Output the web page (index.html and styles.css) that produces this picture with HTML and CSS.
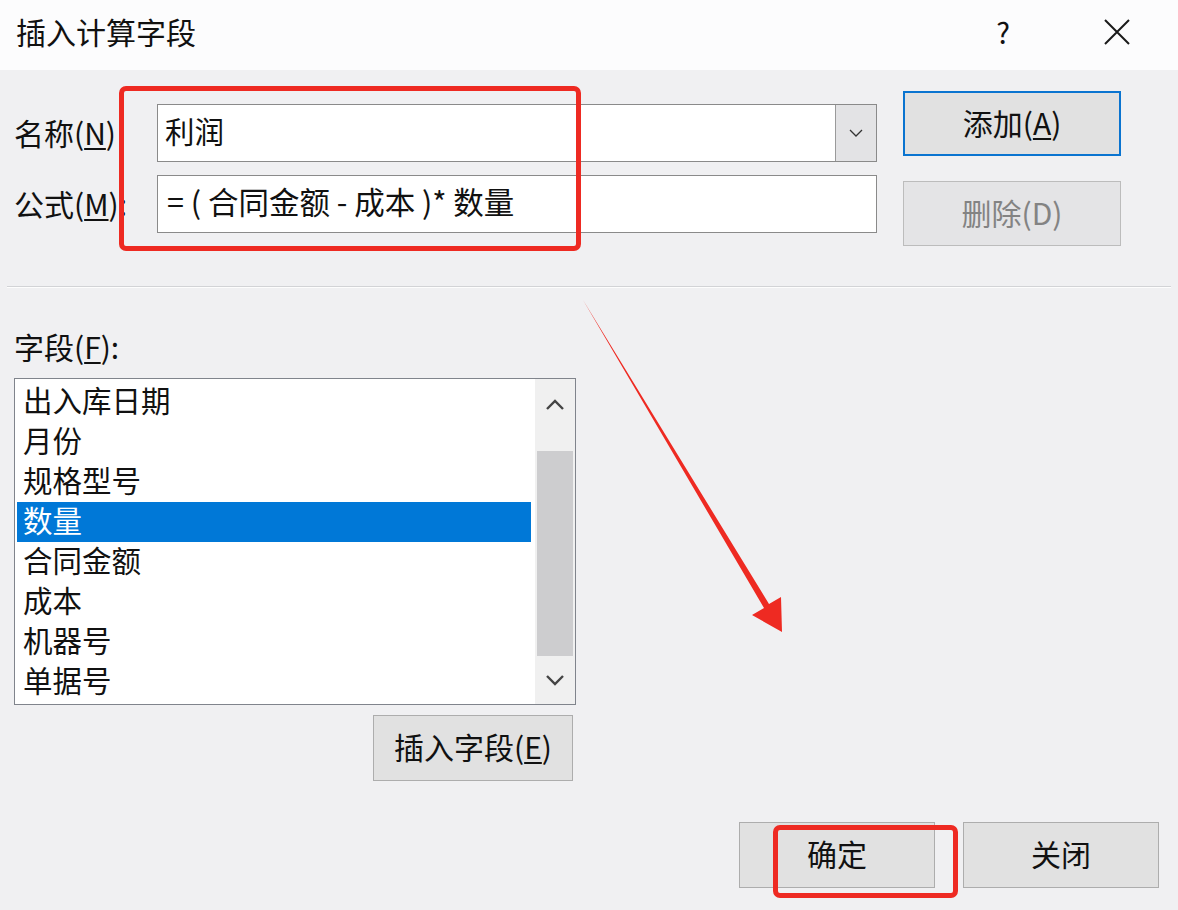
FILE: index.html
```html
<!DOCTYPE html>
<html lang="zh-CN">
<head>
  <meta charset="UTF-8">
  <meta name="viewport" content="width=device-width, initial-scale=1.0">
  <title>插入计算字段</title>
  <link rel="stylesheet" href="styles.css">
</head>
<body>
  <div class="dialog">
    <!-- title bar -->
    <div class="titlebar">
      <span class="title">插入计算字段</span>
      <span class="help">?</span>
      <svg class="close" width="26" height="26" viewBox="0 0 26 26">
        <path d="M1 1 L25 25 M25 1 L1 25" stroke="#1a1a1a" stroke-width="2" fill="none"/>
      </svg>
    </div>

    <div class="content">
      <!-- name / formula -->
      <div class="top">
        <div class="form">
          <div class="row">
            <label>名称(<u>N</u>)</label>
            <div class="box combo">
              <span class="value">利润</span>
              <span class="drop">
                <svg width="14" height="8" viewBox="0 0 14 8"><path d="M1 1 L7 7 L13 1" stroke="#333" stroke-width="1.3" fill="none"/></svg>
              </span>
            </div>
          </div>
          <div class="row">
            <label>公式(<u>M</u>):</label>
            <div class="box">
              <span class="value formula">= ( 合同金额 - 成本 )* 数量</span>
            </div>
          </div>
        </div>
        <div class="side">
          <button class="btn btn-default">添加(<u>A</u>)</button>
          <button class="btn btn-disabled">删除(D)</button>
        </div>
      </div>

      <div class="divider"></div>

      <!-- field list -->
      <div class="fields-label">字段(<u>F</u>):</div>
      <div class="listbox">
        <ul class="items">
          <li>出入库日期</li>
          <li>月份</li>
          <li>规格型号</li>
          <li class="selected">数量</li>
          <li>合同金额</li>
          <li>成本</li>
          <li>机器号</li>
          <li>单据号</li>
        </ul>
        <div class="scrollbar">
          <span class="arrow">
            <svg width="20" height="12" viewBox="0 0 20 12"><path d="M2 10 L10 2 L18 10" stroke="#444" stroke-width="2.4" fill="none"/></svg>
          </span>
          <span class="thumb"></span>
          <span class="arrow">
            <svg width="20" height="12" viewBox="0 0 20 12"><path d="M2 2 L10 10 L18 2" stroke="#444" stroke-width="2.4" fill="none"/></svg>
          </span>
        </div>
      </div>
      <div class="insert-row">
        <button class="btn btn-insert">插入字段(<u>E</u>)</button>
      </div>

      <div class="footer">
        <button class="btn btn-foot">确定</button>
        <button class="btn btn-foot">关闭</button>
      </div>
    </div>

    <!-- red annotations drawn over the dialog -->
    <div class="mark mark-form"></div>
    <div class="mark mark-ok"></div>
    <svg class="pointer" width="1178" height="910" viewBox="0 0 1178 910">
      <polygon points="583,300 769,604 781,597 782,632 752,615 764,608" fill="#ee2a22"/>
    </svg>
  </div>
</body>
</html>
```

FILE: styles.css
```css
body {
  margin: 0;
  font-family: "Noto Sans CJK SC", "Noto Sans", sans-serif;
  color: #111;
  background-color: #f0f0f2;
}

.dialog {
  position: relative;
  width: 1178px;
  height: 910px;
  overflow: hidden;
}

/* title bar */
.titlebar {
  display: flex;
  align-items: center;
  height: 70px;
  padding: 0 48px 0 16px;
  background-color: #fcfcfd;
}

.title {
  font-size: 30px;
  flex: 1;
  margin-top: -9px;
}

.help {
  font-size: 29px;
  margin-right: 94px;
  margin-top: -8px;
}

.close {
  margin-top: -6px;
}

.content {
  padding: 0 19px 0 14px;
}

/* name + formula */
.top {
  display: flex;
  padding-top: 21px;
}

.form {
  width: 863px;
  margin-top: 13px;
  display: flex;
  flex-direction: column;
  gap: 13px;
}

.row {
  display: flex;
  align-items: center;
  height: 58px;
}

.row label {
  width: 143px;
  font-size: 30px;
  white-space: nowrap;
  margin-top: -3px;
}

u {
  text-decoration-thickness: 2px;
  text-underline-offset: 3px;
}

.box {
  flex: 1;
  height: 56px;
  display: flex;
  align-items: center;
  border: 1px solid #8a8a8a;
  background-color: #fff;
}

.value {
  flex: 1;
  font-size: 29.5px;
  padding-left: 7px;
  margin-top: -6px;
}

.formula {
  font-size: 30.5px;
  padding-left: 9px;
}

.drop {
  width: 40px;
  height: 56px;
  display: flex;
  align-items: center;
  justify-content: center;
  border-left: 1px solid #9a9a9a;
  background-color: #e3e3e5;
}

.side {
  margin-left: 26px;
  width: 218px;
  display: flex;
  flex-direction: column;
  gap: 25px;
}

.btn {
  font-family: inherit;
  font-size: 30px;
  color: #111;
  background-color: #e1e1e1;
  border: 1px solid #adadad;
  padding: 0 0 4px;
  cursor: pointer;
}

.btn-default {
  height: 65px;
  border: 2px solid #0a74d0;
}

.btn-disabled {
  height: 65px;
  color: #838383;
  background-color: #e4e4e6;
  border-color: #bcbcbc;
}

.divider {
  margin: 40px -12px 0 -7px;
  border-top: 1px solid #d2d3d6;
  border-bottom: 1px solid #fdfdfd;
}

/* field list */
.fields-label {
  font-size: 30px;
  margin-top: 36px;
  height: 54px;
}

.listbox {
  width: 560px;
  height: 325px;
  display: flex;
  border: 1px solid #80848c;
  background-color: #fff;
}

.items {
  list-style: none;
  margin: 0;
  padding: 3px 4px 0 2px;
  flex: 1;
}

.items li {
  height: 40px;
  line-height: 35px;
  font-size: 29.5px;
  padding-left: 6px;
}

.items li.selected {
  background-color: #0078d7;
  color: #fff;
}

.scrollbar {
  width: 40px;
  display: flex;
  flex-direction: column;
  align-items: center;
  background-color: #f0f0f0;
}

.arrow {
  height: 48px;
  display: flex;
  align-items: center;
  justify-content: center;
}

.scrollbar .arrow:first-child {
  height: 52px;
  margin-bottom: 20px;
}

.thumb {
  width: 36px;
  height: 207px;
  background-color: #cdcdcf;
}

.insert-row {
  width: 559px;
  display: flex;
  justify-content: flex-end;
  margin-top: 10px;
}

.btn-insert {
  width: 200px;
  height: 66px;
}

.footer {
  display: flex;
  justify-content: flex-end;
  gap: 28px;
  margin-top: 41px;
}

.btn-foot {
  width: 196px;
  height: 66px;
}

/* red annotations */
.mark {
  position: absolute;
  border: 5px solid #ee2a22;
  border-radius: 7px;
  box-sizing: border-box;
}

.mark-form {
  left: 119px;
  top: 86px;
  width: 462px;
  height: 165px;
}

.mark-ok {
  left: 773px;
  top: 825px;
  width: 185px;
  height: 73px;
}

.pointer {
  position: absolute;
  left: 0;
  top: 0;
}
```
